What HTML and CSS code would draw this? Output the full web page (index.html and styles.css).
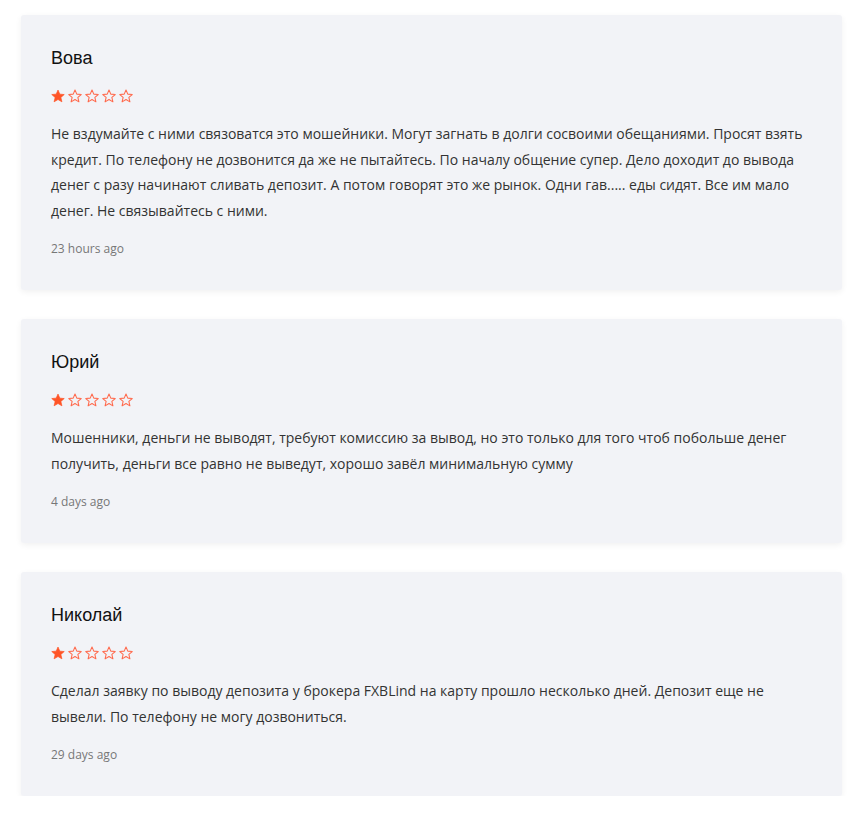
FILE: index.html
```html
<!DOCTYPE html>
<html lang="ru">
<head>
<meta charset="utf-8">
<link rel="stylesheet" href="styles.css">
</head>
<body>
<div class="list">
  <div class="card">
    <div class="name">Вова</div>
    <div class="stars">
      <svg class="star" viewBox="0 0 24 24"><path class="full" d="M12 1.8l3.1 7 7.6.7-5.8 5 1.8 7.5L12 18l-6.7 4 1.8-7.5-5.8-5 7.6-.7z"/></svg>
      <svg class="star" viewBox="0 0 24 24"><path class="empty" d="M12 1.8l3.1 7 7.6.7-5.8 5 1.8 7.5L12 18l-6.7 4 1.8-7.5-5.8-5 7.6-.7z"/></svg>
      <svg class="star" viewBox="0 0 24 24"><path class="empty" d="M12 1.8l3.1 7 7.6.7-5.8 5 1.8 7.5L12 18l-6.7 4 1.8-7.5-5.8-5 7.6-.7z"/></svg>
      <svg class="star" viewBox="0 0 24 24"><path class="empty" d="M12 1.8l3.1 7 7.6.7-5.8 5 1.8 7.5L12 18l-6.7 4 1.8-7.5-5.8-5 7.6-.7z"/></svg>
      <svg class="star" viewBox="0 0 24 24"><path class="empty" d="M12 1.8l3.1 7 7.6.7-5.8 5 1.8 7.5L12 18l-6.7 4 1.8-7.5-5.8-5 7.6-.7z"/></svg>
    </div>
    <p class="text">Не вздумайте с ними связоватся это мошейники. Могут загнать в долги сосвоими обещаниями. Просят взять кредит. По телефону не дозвонится да же не пытайтесь. По началу общение супер. Дело доходит до вывода денег с разу начинают сливать депозит. А потом говорят это же рынок. Одни гав..... еды сидят. Все им мало денег. Не связывайтесь с ними.</p>
    <div class="time">23 hours ago</div>
  </div>
  <div class="card">
    <div class="name">Юрий</div>
    <div class="stars">
      <svg class="star" viewBox="0 0 24 24"><path class="full" d="M12 1.8l3.1 7 7.6.7-5.8 5 1.8 7.5L12 18l-6.7 4 1.8-7.5-5.8-5 7.6-.7z"/></svg>
      <svg class="star" viewBox="0 0 24 24"><path class="empty" d="M12 1.8l3.1 7 7.6.7-5.8 5 1.8 7.5L12 18l-6.7 4 1.8-7.5-5.8-5 7.6-.7z"/></svg>
      <svg class="star" viewBox="0 0 24 24"><path class="empty" d="M12 1.8l3.1 7 7.6.7-5.8 5 1.8 7.5L12 18l-6.7 4 1.8-7.5-5.8-5 7.6-.7z"/></svg>
      <svg class="star" viewBox="0 0 24 24"><path class="empty" d="M12 1.8l3.1 7 7.6.7-5.8 5 1.8 7.5L12 18l-6.7 4 1.8-7.5-5.8-5 7.6-.7z"/></svg>
      <svg class="star" viewBox="0 0 24 24"><path class="empty" d="M12 1.8l3.1 7 7.6.7-5.8 5 1.8 7.5L12 18l-6.7 4 1.8-7.5-5.8-5 7.6-.7z"/></svg>
    </div>
    <p class="text">Мошенники, деньги не выводят, требуют комиссию за вывод, но это только для того чтоб побольше денег получить, деньги все равно не выведут, хорошо завёл минимальную сумму</p>
    <div class="time">4 days ago</div>
  </div>
  <div class="card">
    <div class="name">Николай</div>
    <div class="stars">
      <svg class="star" viewBox="0 0 24 24"><path class="full" d="M12 1.8l3.1 7 7.6.7-5.8 5 1.8 7.5L12 18l-6.7 4 1.8-7.5-5.8-5 7.6-.7z"/></svg>
      <svg class="star" viewBox="0 0 24 24"><path class="empty" d="M12 1.8l3.1 7 7.6.7-5.8 5 1.8 7.5L12 18l-6.7 4 1.8-7.5-5.8-5 7.6-.7z"/></svg>
      <svg class="star" viewBox="0 0 24 24"><path class="empty" d="M12 1.8l3.1 7 7.6.7-5.8 5 1.8 7.5L12 18l-6.7 4 1.8-7.5-5.8-5 7.6-.7z"/></svg>
      <svg class="star" viewBox="0 0 24 24"><path class="empty" d="M12 1.8l3.1 7 7.6.7-5.8 5 1.8 7.5L12 18l-6.7 4 1.8-7.5-5.8-5 7.6-.7z"/></svg>
      <svg class="star" viewBox="0 0 24 24"><path class="empty" d="M12 1.8l3.1 7 7.6.7-5.8 5 1.8 7.5L12 18l-6.7 4 1.8-7.5-5.8-5 7.6-.7z"/></svg>
    </div>
    <p class="text">Сделал заявку по выводу депозита у брокера FXBLind на карту прошло несколько дней. Депозит еще не вывели. По телефону не могу дозвониться.</p>
    <div class="time">29 days ago</div>
  </div>
</div>
</body>
</html>
```

FILE: styles.css
```css
html, body {
  margin: 0;
  padding: 0;
  background: #ffffff;
}

.list {
  display: flex;
  flex-direction: column;
  gap: 29px;
  padding: 15px 19px 0 21px;
}

.card {
  background: #f2f3f7;
  border-radius: 3px;
  box-shadow: 0 2px 6px rgba(0, 0, 0, 0.06);
  padding: 32px 30px 32px 30px;
  display: flex;
  flex-direction: column;
}

.name {
  font-family: "Liberation Sans", Arial, sans-serif;
  font-size: 18px;
  line-height: 22px;
  color: #111111;
}

.stars {
  display: flex;
  gap: 3px;
  margin-top: 20px;
  height: 14px;
}

.star {
  width: 14px;
  height: 14px;
  display: block;
}

.star .full {
  fill: #ff5427;
  stroke: #ff5427;
  stroke-width: 1.2;
  stroke-linejoin: round;
}

.star .empty {
  fill: none;
  stroke: #ff6a4d;
  stroke-width: 1.8;
  stroke-linejoin: round;
}

.text {
  margin: 18px 0 0 0;
  font-family: "Open Sans", sans-serif;
  font-size: 14px;
  line-height: 25.5px;
  color: #333333;
}

.time {
  margin-top: 17px;
  font-family: "Open Sans", sans-serif;
  font-size: 12px;
  line-height: 18px;
  color: #777777;
}
```
